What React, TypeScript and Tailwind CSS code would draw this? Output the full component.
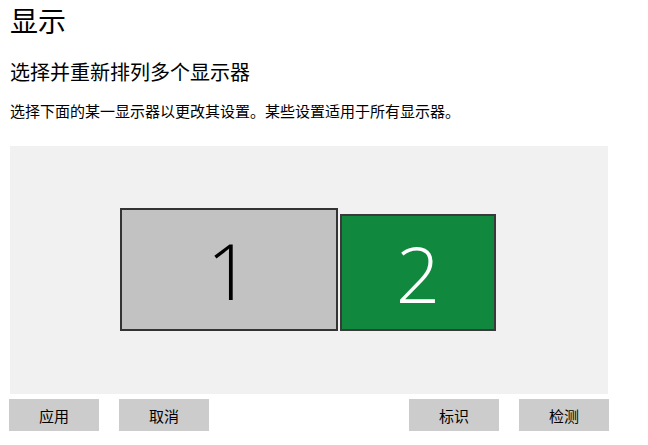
import React from "react";

const cjk = { fontFamily: '"Noto Sans CJK SC", "Noto Sans", sans-serif' };
const digit = { fontFamily: '"Open Sans", "Lato", sans-serif' };

function Btn({ label }: { label: string }) {
  return (
    <div
      className="w-[90px] h-[32px] bg-[#cccccc] flex items-center justify-center text-[15px] text-black leading-none"
      style={cjk}
    >
      {label}
    </div>
  );
}

export default function App() {
  return (
    <div className="w-[648px] h-[445px] bg-white overflow-hidden text-black" style={cjk}>
      <div className="pl-[10px] pt-[2px]">
        <div className="text-[28px] leading-[36px]">显示</div>
        <div className="mt-[20px] text-[20px] leading-[28px]">选择并重新排列多个显示器</div>
        <div className="mt-[15px] text-[15px] leading-[20px]">选择下面的某一显示器以更改其设置。某些设置适用于所有显示器。</div>
      </div>
      <div className="mt-[25px] ml-[10px] w-[598px] h-[248px] bg-[#f1f1f1] flex items-end pl-[110px] pb-[63px] gap-[2px]">
        <div
          className="w-[218px] h-[123px] bg-[#c2c2c2] border-2 border-[#333333] flex items-center justify-center text-[78px] font-light leading-none text-black"
          style={digit}
        >
          1
        </div>
        <div
          className="w-[156px] h-[117px] bg-[#10893e] border-2 border-[#3a3a3a] flex items-center justify-center text-[78px] font-light leading-none text-white"
          style={digit}
        >
          2
        </div>
      </div>
      <div className="mt-[5px] ml-[9px] w-[600px] flex justify-between">
        <div className="flex gap-[20px]">
          <Btn label="应用" />
          <Btn label="取消" />
        </div>
        <div className="flex gap-[20px]">
          <Btn label="标识" />
          <Btn label="检测" />
        </div>
      </div>
    </div>
  );
}
